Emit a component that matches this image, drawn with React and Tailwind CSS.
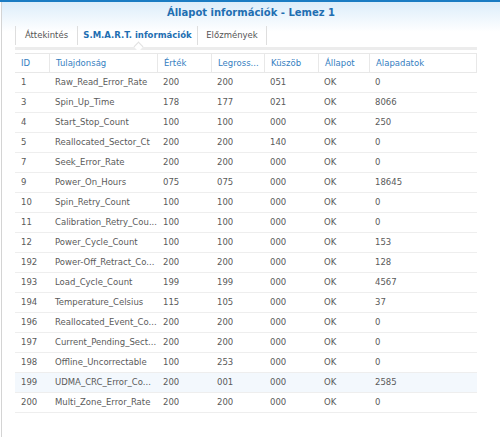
import React from 'react';

const rows = [
  ['1', 'Raw_Read_Error_Rate', '200', '200', '051', 'OK', '0'],
  ['3', 'Spin_Up_Time', '178', '177', '021', 'OK', '8066'],
  ['4', 'Start_Stop_Count', '100', '100', '000', 'OK', '250'],
  ['5', 'Reallocated_Sector_Ct', '200', '200', '140', 'OK', '0'],
  ['7', 'Seek_Error_Rate', '200', '200', '000', 'OK', '0'],
  ['9', 'Power_On_Hours', '075', '075', '000', 'OK', '18645'],
  ['10', 'Spin_Retry_Count', '100', '100', '000', 'OK', '0'],
  ['11', 'Calibration_Retry_Cou...', '100', '100', '000', 'OK', '0'],
  ['12', 'Power_Cycle_Count', '100', '100', '000', 'OK', '153'],
  ['192', 'Power-Off_Retract_Co...', '200', '200', '000', 'OK', '128'],
  ['193', 'Load_Cycle_Count', '199', '199', '000', 'OK', '4567'],
  ['194', 'Temperature_Celsius', '115', '105', '000', 'OK', '37'],
  ['196', 'Reallocated_Event_Co...', '200', '200', '000', 'OK', '0'],
  ['197', 'Current_Pending_Sect...', '200', '200', '000', 'OK', '0'],
  ['198', 'Offline_Uncorrectable', '100', '253', '000', 'OK', '0'],
  ['199', 'UDMA_CRC_Error_Co...', '200', '001', '000', 'OK', '2585'],
  ['200', 'Multi_Zone_Error_Rate', '200', '200', '000', 'OK', '0'],
];

const cols = [
  { label: 'ID', w: 'w-[34px]' },
  { label: 'Tulajdonság', w: 'w-[108px]' },
  { label: 'Érték', w: 'w-[54px]' },
  { label: 'Legross...', w: 'w-[53px]' },
  { label: 'Küszöb', w: 'w-[54px]' },
  { label: 'Állapot', w: 'w-[51px]' },
  { label: 'Alapadatok', w: 'w-[108px]' },
];

const tabs = [
  { label: 'Áttekintés', w: 'w-[62px]' },
  { label: 'S.M.A.R.T. információk', w: 'w-[120px]', active: true },
  { label: 'Előzmények', w: 'w-[70px]' },
];

export default function App() {
  return (
    <div
      className="w-[500px] h-[437px] overflow-hidden bg-white flex flex-col"
      style={{ fontFamily: '"DejaVu Sans", Verdana, sans-serif' }}
    >
      <div className="h-[2px] bg-[#1b7cc3]" />
      <div className="flex-1 flex flex-col border-l border-[#d4d4d4] ml-[1px] bg-gradient-to-b from-[#dcedfa] to-white to-[30px]">
        <div className="h-[21px] flex items-center justify-center text-[10px] font-bold text-[#1f6fb2]">
          Állapot információk - Lemez 1
        </div>

        <div className="pl-[13px] pr-[23px]">
          <div className="flex h-[24px] items-center">
            {tabs.map((t) => (
              <div
                key={t.label}
                className={`${t.w} h-[19px] flex items-center justify-center border-l border-[#dedede] last:border-r text-[8.5px] ${
                  t.active ? 'font-bold text-[#1e6fb2]' : 'text-[#555]'
                }`}
              >
                {t.label}
              </div>
            ))}
          </div>

          <div className="relative h-[3px] bg-[#ececec]">
            <div className="absolute left-[120px] top-[-4px] w-[7px] h-[7px] rotate-45 bg-white border-l border-t border-[#e0e0e0]" />
          </div>

          <div className="mt-[3px] w-[462px]">
            <div className="flex h-[20px] border-t border-b border-[#e8e8e8] text-[8.5px] text-[#3580bf]">
              {cols.map((c, i) => (
                <div
                  key={c.label}
                  className={`${c.w} shrink-0 flex items-center px-[6px] whitespace-nowrap ${i > 0 ? 'border-l border-[#e8e8e8]' : ''} ${i === cols.length - 1 ? 'border-r' : ''}`}
                >
                  {c.label}
                </div>
              ))}
            </div>
            {rows.map((r) => (
              <div
                key={r[0]}
                className={`flex h-[20px] border-b border-[#eeeeee] text-[8.5px] text-[#5a5a5a] ${r[0] === '199' ? 'bg-[#f3f8fd]' : ''}`}
              >
                {r.map((v, i) => (
                  <div key={i} className={`${cols[i].w} shrink-0 flex items-center px-[6px] whitespace-nowrap`}>
                    {v}
                  </div>
                ))}
              </div>
            ))}
          </div>
        </div>
      </div>
    </div>
  );
}
